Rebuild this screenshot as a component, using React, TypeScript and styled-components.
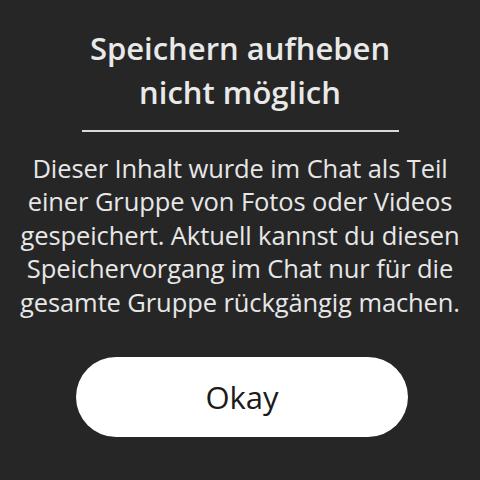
import styled, { createGlobalStyle } from 'styled-components';

const GlobalStyle = createGlobalStyle`
  html, body {
    margin: 0;
    padding: 0;
    background: #262626;
  }
  body {
    font-family: "Open Sans", Lato, sans-serif;
  }
`;

const Sheet = styled.section`
  width: 480px;
  height: 480px;
  box-sizing: border-box;
  background: #262626;
  display: flex;
  flex-direction: column;
  align-items: center;
  padding-top: 26px;
`;

const Title = styled.h2`
  margin: 0;
  font-size: 31px;
  font-weight: 600;
  line-height: 44px;
  color: #e9e9e9;
  text-align: center;
`;

const Divider = styled.hr`
  width: 317px;
  height: 1.5px;
  border: 0;
  margin: 16px 0 20px;
  background: #d9d9d9;
`;

const Message = styled.p`
  margin: 0;
  width: 480px;
  font-size: 25.5px;
  line-height: 33.5px;
  color: #e7e7e7;
  text-align: center;
  letter-spacing: -0.1px;
`;

const OkayButton = styled.button`
  margin: 38px 0 0 4px;
  width: 332px;
  height: 80px;
  border: 0;
  border-radius: 40px;
  background: #ffffff;
  color: #1b1b1b;
  font-family: inherit;
  font-size: 31px;
  cursor: pointer;
`;

export default function App() {
  return (
    <>
      <GlobalStyle />
      <Sheet>
        <Title>
          Speichern aufheben
          <br />
          nicht möglich
        </Title>
        <Divider />
        <Message>
          Dieser Inhalt wurde im Chat als Teil
          <br />
          einer Gruppe von Fotos oder Videos
          <br />
          gespeichert. Aktuell kannst du diesen
          <br />
          Speichervorgang im Chat nur für die
          <br />
          gesamte Gruppe rückgängig machen.
        </Message>
        <OkayButton>Okay</OkayButton>
      </Sheet>
    </>
  );
}
